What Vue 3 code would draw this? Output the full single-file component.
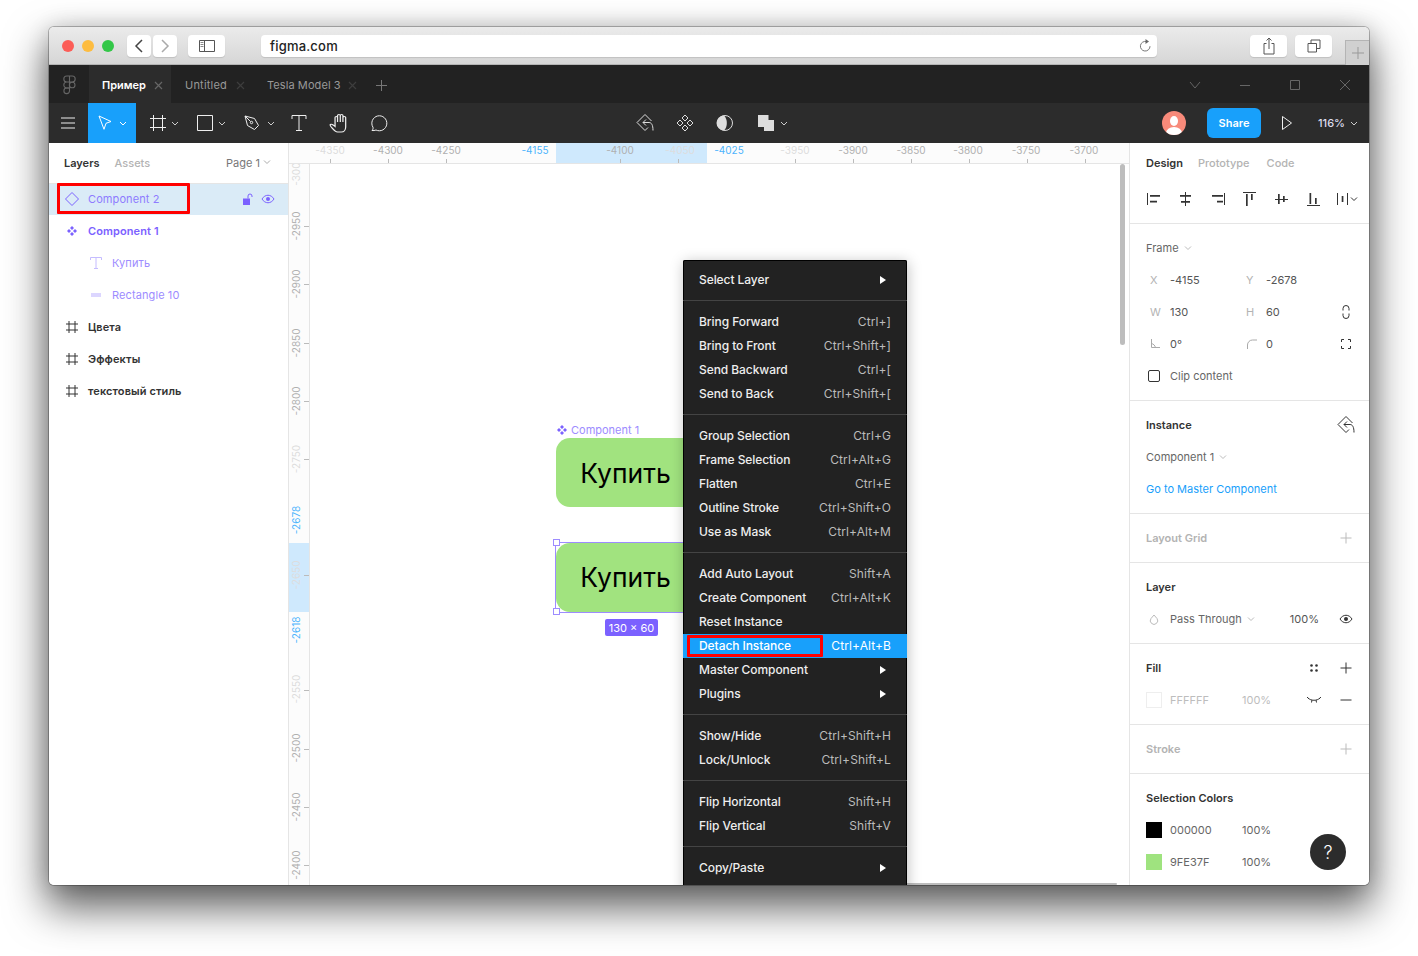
<script setup>
const rulerX = [
  { t: '-4350', x: 41, c: 'fade' }, { t: '-4300', x: 99 }, { t: '-4250', x: 157 },
  { t: '-4155', x: 246, c: 'blue' }, { t: '-4100', x: 331 }, { t: '-4050', x: 391, c: 'fade' },
  { t: '-4025', x: 440, c: 'blue' }, { t: '-3950', x: 506, c: 'fade' }, { t: '-3900', x: 564 },
  { t: '-3850', x: 622 }, { t: '-3800', x: 679 }, { t: '-3750', x: 737 }, { t: '-3700', x: 795 }
]
const rulerTicks = [41, 99, 157, 331, 389, 506, 564, 622, 680, 738, 796]
const rulerY = [
  { t: '-3000', y: 28, c: 'fade' }, { t: '-2950', y: 83 }, { t: '-2900', y: 141 }, { t: '-2850', y: 200 },
  { t: '-2800', y: 258 }, { t: '-2750', y: 316, c: 'fade' }, { t: '-2678', y: 377, c: 'blue' },
  { t: '-2650', y: 432, c: 'fade' }, { t: '-2618', y: 487, c: 'blue' }, { t: '-2550', y: 546, c: 'fade' },
  { t: '-2500', y: 605 }, { t: '-2450', y: 664 }, { t: '-2400', y: 722 }
]
const rulerYTicks = [83, 141, 200, 258, 316, 432, 547, 606, 664, 722]
const layers = [
  { name: 'Component 2', icon: 'diamond', cls: 'sel' },
  { name: 'Component 1', icon: 'comp', cls: 'comp' },
  { name: 'Купить', icon: 'text', cls: 'child' },
  { name: 'Rectangle 10', icon: 'rect', cls: 'child' },
  { name: 'Цвета', icon: 'hash', cls: 'frame' },
  { name: 'Эффекты', icon: 'hash', cls: 'frame' },
  { name: 'текстовый стиль', icon: 'hash', cls: 'frame' }
]
const menu = [
  [{ l: 'Select Layer', sub: true }],
  [{ l: 'Bring Forward', k: 'Ctrl+]' }, { l: 'Bring to Front', k: 'Ctrl+Shift+]' }, { l: 'Send Backward', k: 'Ctrl+[' }, { l: 'Send to Back', k: 'Ctrl+Shift+[' }],
  [{ l: 'Group Selection', k: 'Ctrl+G' }, { l: 'Frame Selection', k: 'Ctrl+Alt+G' }, { l: 'Flatten', k: 'Ctrl+E' }, { l: 'Outline Stroke', k: 'Ctrl+Shift+O' }, { l: 'Use as Mask', k: 'Ctrl+Alt+M' }],
  [{ l: 'Add Auto Layout', k: 'Shift+A' }, { l: 'Create Component', k: 'Ctrl+Alt+K' }, { l: 'Reset Instance' }, { l: 'Detach Instance', k: 'Ctrl+Alt+B', on: true }, { l: 'Master Component', sub: true }, { l: 'Plugins', sub: true }],
  [{ l: 'Show/Hide', k: 'Ctrl+Shift+H' }, { l: 'Lock/Unlock', k: 'Ctrl+Shift+L' }],
  [{ l: 'Flip Horizontal', k: 'Shift+H' }, { l: 'Flip Vertical', k: 'Shift+V' }],
  [{ l: 'Copy/Paste', sub: true }]
]
const detachPath = 'M15.500 8 9 1.500 1 9.500l8 8 3-3M10 6.500l-3 3 3 3M7 9.500h6c2.500 0 4 2.500 4 8'
</script>

<template>
  <div class="stage">
    <div class="win">
      <header class="title">
        <div class="lights"><i class="r"></i><i class="y"></i><i class="g"></i></div>
        <div class="navs">
          <button class="sb w24"><svg width="12" height="16" viewBox="0 0 12 16"><path d="M9 2 3 8l6 6" fill="none" stroke="#444" stroke-width="1.500"/></svg></button>
          <button class="sb w24"><svg width="12" height="16" viewBox="0 0 12 16"><path d="m3 2 6 6-6 6" fill="none" stroke="#aaa" stroke-width="1.500"/></svg></button>
        </div>
        <button class="sb w37 side"><svg width="16" height="12" viewBox="0 0 16 12"><path d="M.5.500h15v11H.5zM5.500.500v11" fill="none" stroke="#555"/><path d="M1.500 2.500h3M1.500 4.500h3M1.500 6.500h3" stroke="#888"/></svg></button>
        <div class="url"><span>figma.com</span>
          <svg class="reload" width="12" height="16" viewBox="0 0 12 16"><path d="M7.500 3.600A4.800 4.800 0 1 0 11 8.200" fill="none" stroke="#777"/><path d="M6.500 1v5l3.500-2.500z" fill="#666"/></svg>
        </div>
        <button class="sb w37 share-b"><svg width="12" height="18" viewBox="0 0 12 18"><path d="M3.500 6.500H1v10.500h10V6.500H8.500M6 12V1M3.500 3.500 6 1l2.500 2.500" fill="none" stroke="#555"/></svg></button>
        <button class="sb w37 tabs-b"><svg width="14" height="14" viewBox="0 0 14 14"><path d="M1 4.500h8.500V13H1zM4 4.500V1h9v8.500H9.500" fill="none" stroke="#555"/></svg></button>
        <div class="newtab"><svg width="12" height="12" viewBox="0 0 12 12"><path d="M6 0v12M0 6h12" stroke="#999"/></svg></div>
      </header>

      <div class="tabbar">
        <div class="logo"><svg width="13" height="20" viewBox="0 0 13 20"><g fill="none" stroke="#666" stroke-width="1.100"><path d="M6.500 1H3.800a2.800 2.800 0 0 0 0 6h2.700zM6.500 1h2.700a2.800 2.800 0 0 1 0 6H6.500zM6.500 7H3.800a2.800 2.800 0 0 0 0 6h2.700z"/><circle cx="9.200" cy="10" r="2.800"/><path d="M6.500 13H3.800a2.800 2.800 0 1 0 2.700 3z"/></g></svg></div>
        <div class="tab active"><span>Пример</span><svg class="x" width="9" height="9" viewBox="0 0 9 9"><path d="m1 1 7 7M8 1 1 8" stroke="#666" stroke-width="1.200"/></svg></div>
        <div class="tab t2"><span>Untitled</span><svg class="x" width="9" height="9" viewBox="0 0 9 9"><path d="m1 1 7 7M8 1 1 8" stroke="#3d3d3d" stroke-width="1.200"/></svg></div>
        <div class="tab t3"><span>Tesla Model 3</span><svg class="x" width="9" height="9" viewBox="0 0 9 9"><path d="m1 1 7 7M8 1 1 8" stroke="#3d3d3d" stroke-width="1.200"/></svg></div>
        <svg class="plus" width="11" height="11" viewBox="0 0 11 11"><path d="M5.500 0v11M0 5.500h11" stroke="#777"/></svg>
        <div class="winctl">
          <svg width="12" height="8" viewBox="0 0 12 8"><path d="m1 1 5 6 5-6" fill="none" stroke="#666"/></svg>
          <svg width="12" height="12" viewBox="0 0 12 12"><path d="M1 6.500h10" stroke="#666"/></svg>
          <svg width="12" height="12" viewBox="0 0 12 12"><path d="M1.500 1.500h9v9h-9z" fill="none" stroke="#666"/></svg>
          <svg width="12" height="12" viewBox="0 0 12 12"><path d="m1 1 10 10M11 1 1 11" stroke="#666"/></svg>
        </div>
      </div>

      <div class="toolbar">
        <div class="burger"><svg width="16" height="12" viewBox="0 0 16 12"><path d="M1 1h14M1 6h14M1 11h14" stroke="#eee"/></svg></div>
        <div class="tool move">
          <svg width="16" height="18" viewBox="0 0 16 18"><path d="M2 2l12 5.500-5 1.800-2 6z" fill="none" stroke="#fff"/></svg>
          <svg class="ch" width="8" height="5" viewBox="0 0 8 5"><path d="m1 1 3 3 3-3" fill="none" stroke="#fff"/></svg>
        </div>
        <div class="tool t-frame">
          <svg width="16" height="16" viewBox="0 0 16 16"><path d="M3.500 0v16M12.500 0v16M0 3.500h16M0 12.500h16" stroke="#eee"/></svg>
          <svg class="ch" width="8" height="5" viewBox="0 0 8 5"><path d="m1 1 3 3 3-3" fill="none" stroke="#ccc"/></svg>
        </div>
        <div class="tool t-rect">
          <svg width="16" height="16" viewBox="0 0 16 16"><path d="M.5.500h15v15H.5z" fill="none" stroke="#eee"/></svg>
          <svg class="ch" width="8" height="5" viewBox="0 0 8 5"><path d="m1 1 3 3 3-3" fill="none" stroke="#ccc"/></svg>
        </div>
        <div class="tool t-pen">
          <svg width="16" height="16" viewBox="0 0 16 16"><path d="M1 1l9.500 2.500 4 7-4 4-7-4zM1 1l5.500 5.500" fill="none" stroke="#eee"/><circle cx="7.500" cy="7.500" r="1.200" fill="none" stroke="#eee"/></svg>
          <svg class="ch" width="8" height="5" viewBox="0 0 8 5"><path d="m1 1 3 3 3-3" fill="none" stroke="#ccc"/></svg>
        </div>
        <div class="tool t-one"><svg width="16" height="16" viewBox="0 0 16 16"><path d="M1 4V.500h14V4M8 .500V15.500M5 15.500h6" fill="none" stroke="#eee"/></svg></div>
        <div class="tool t-one"><svg width="20" height="20" viewBox="0 0 20 20"><path transform="translate(-.2 0) scale(1.250 1)" d="M7 19c-2 0-3-2-5-5-.8-1.300-1.300-2-.8-2.500.8-.7 2-.1 3.800 2V4.500c0-1.500 2-1.500 2 0V9V2.500c0-1.500 2.200-1.500 2.200 0V9V2.500c0-1.500 2.100-1.500 2.100 0V9V4.500c0-1.500 2.200-1.500 2.200 0V14c0 3-1.500 5-3.500 5z" fill="none" stroke="#eee"/></svg></div>
        <div class="tool t-one"><svg width="18" height="18" viewBox="0 0 18 18"><path d="M2 16.500c1-.8 1.200-2 1-3.200A7.500 7.500 0 1 1 6 16c-1.300.6-2.600.7-4 .5z" fill="none" stroke="#eee"/></svg></div>
        <div class="center">
          <svg width="20" height="20" viewBox="0 0 20 20"><path :d="detachPath" fill="none" stroke="#ddd" transform="translate(1 0)"/></svg>
          <svg width="20" height="20" viewBox="0 0 20 20"><g fill="none" stroke="#ddd"><path d="m10 2 3 3-3 3-3-3zM10 12l3 3-3 3-3-3zM5 7l3 3-3 3-3-3zM15 7l3 3-3 3-3-3z"/></g></svg>
          <svg width="20" height="20" viewBox="0 0 20 20"><circle cx="10" cy="10" r="7.500" fill="none" stroke="#ddd"/><path d="M9 2.500A7.500 7.500 0 0 0 9 17.500c2-2 2.800-4.500 2.800-7.500S11 4.500 9 2.500z" fill="#ddd"/></svg>
          <div class="bool">
            <svg width="17" height="17" viewBox="0 0 17 17"><path d="M0 0h10.500v5h5.500v11H6v-4H0z" fill="#ddd"/></svg>
            <svg width="8" height="5" viewBox="0 0 8 5"><path d="m1 1 3 3 3-3" fill="none" stroke="#ccc"/></svg>
          </div>
        </div>
        <div class="right">
          <svg class="avatar" width="24" height="24" viewBox="0 0 24 24"><defs><clipPath id="av"><circle cx="12" cy="12" r="12"/></clipPath></defs><circle cx="12" cy="12" r="12" fill="#f88a7a"/><g clip-path="url(#av)" fill="#fff"><ellipse cx="12" cy="10" rx="4" ry="5"/><ellipse cx="12" cy="22" rx="8" ry="6"/></g></svg>
          <div class="share">Share</div>
          <svg class="play" width="12" height="16" viewBox="0 0 12 16"><path d="M1.500 1.500 10.500 8l-9 6.500z" fill="none" stroke="#eee"/></svg>
          <span class="zoom">116%</span>
          <svg width="8" height="5" viewBox="0 0 8 5"><path d="m1 1 3 3 3-3" fill="none" stroke="#ccc"/></svg>
        </div>
      </div>

      <div class="main">
        <aside class="left">
          <div class="lhead"><span class="on">Layers</span><span class="off">Assets</span><span class="page">Page 1</span><svg width="8" height="5" viewBox="0 0 8 5"><path d="m1 .5 3 3 3-3" fill="none" stroke="#aaa"/></svg></div>
          <div v-for="l in layers" :key="l.name" class="lrow" :class="l.cls">
            <svg width="16" height="16" viewBox="0 0 16 16" class="licon">
              <path v-if="l.icon === 'diamond'" d="m8 1.500 6.500 6.500L8 14.500 1.500 8z" fill="none" stroke="#7b61ff"/>
              <path v-else-if="l.icon === 'comp'" d="m8 3 2 2-2 2-2-2zM8 9l2 2-2 2-2-2zM5 6l2 2-2 2-2-2zM11 6l2 2-2 2-2-2z" fill="#7b61ff"/>
              <path v-else-if="l.icon === 'text'" d="M2.500 5V2.500h11V5M8 2.500v11M6 13.500h4" fill="none" stroke="#c5bcff"/>
              <rect v-else-if="l.icon === 'rect'" x="3" y="6" width="10" height="4" fill="#dcd6ff"/>
              <path v-else d="M5 2v12M11 2v12M2 5h12M2 11h12" stroke="#333"/>
            </svg>
            <span class="lname">{{ l.name }}</span>
            <template v-if="l.cls === 'sel'">
              <svg class="lock" width="10" height="12" viewBox="0 0 10 12"><path d="M0 5.500h7v6.500H0z" fill="#7b61ff"/><path d="M5 5.500V3a2 2 0 0 1 4 0v1" fill="none" stroke="#7b61ff"/></svg>
              <svg class="eye" width="14" height="10" viewBox="0 0 14 10"><path d="M1 5c3-5 9-5 12 0-3 5-9 5-12 0z" fill="none" stroke="#7b61ff"/><circle cx="7" cy="5" r="2" fill="#7b61ff"/></svg>
            </template>
          </div>
        </aside>

        <section class="canvas">
          <div class="rtop">
            <div class="hl-x"></div>
            <span v-for="r in rulerX" :key="r.t" class="rx" :class="r.c" :style="{ left: r.x + 'px' }">{{ r.t }}</span>
            <i v-for="t in rulerTicks" :key="t" class="tx" :style="{ left: t + 'px' }"></i>
          </div>
          <div class="rleft">
            <div class="hl-y"></div>
            <span v-for="r in rulerY" :key="r.t" class="ry" :class="r.c" :style="{ top: r.y + 'px' }">{{ r.t }}</span>
            <i v-for="t in rulerYTicks" :key="t" class="ty" :style="{ top: t + 'px' }"></i>
          </div>

          <div class="clabel"><svg width="10" height="10" viewBox="0 0 10 10"><path d="m5 0 2 2-2 2-2-2zM5 6l2 2-2 2-2-2zM2 3l2 2-2 2-2-2zM8 3l2 2-2 2-2-2z" fill="#7b61ff"/></svg><span>Component 1</span></div>
          <div class="btn b1">Купить</div>
          <div class="btn b2">Купить</div>
          <div class="selbox"></div>
          <i class="hd h1"></i><i class="hd h2"></i>
          <div class="size">130 × 60</div>
          <div class="vscroll"></div>
          <div class="hscroll"></div>
        </section>

        <aside class="props">
          <div class="ptabs"><span class="on">Design</span><span class="off">Prototype</span><span class="off">Code</span></div>
          <div class="aligns sect">
            <svg width="16" height="16" viewBox="0 0 16 16"><path d="M2.500 2v12" stroke="#333"/><path d="M5 4h10v1.700H5zM5 9.700h7v1.700H5z" fill="#333"/></svg>
            <svg width="16" height="16" viewBox="0 0 16 16"><path d="M8.500 1v14" stroke="#333"/><path d="M3 4h11v1.700H3zM4 10h9v1.700H4z" fill="#333"/></svg>
            <svg width="16" height="16" viewBox="0 0 16 16"><path d="M15.500 2v12" stroke="#333"/><path d="M3 4h11v1.700H3zM8 9.700h6v1.700H8z" fill="#333"/></svg>
            <svg width="16" height="16" viewBox="0 0 16 16"><path d="M2 1.500h13" stroke="#333"/><path d="M5 3h1.700v12H5zM10 3h1.700v6H10z" fill="#333"/></svg>
            <svg width="16" height="16" viewBox="0 0 16 16"><path d="M2 8.500h13" stroke="#333"/><path d="M5 3h1.700v10H5zM10 5h1.700v6H10z" fill="#333"/></svg>
            <svg width="16" height="16" viewBox="0 0 16 16"><path d="M2 14.500h13" stroke="#333"/><path d="M4.500 2h1.700v11H4.500zM10 7h1.700v6H10z" fill="#333"/></svg>
            <div class="dist"><svg width="12" height="16" viewBox="0 0 12 16"><path d="M.5 2v12M10.500 2v12" stroke="#333"/><path d="M4.700 5h1.700v6H4.700z" fill="#333"/></svg><svg width="8" height="5" viewBox="0 0 8 5"><path d="m1 .5 3 3 3-3" fill="none" stroke="#333"/></svg></div>
          </div>
          <div class="sect">
            <div class="row"><span class="v">Frame</span><svg class="cv" width="8" height="5" viewBox="0 0 8 5"><path d="m1 .5 3 3 3-3" fill="none" stroke="#bbb"/></svg></div>
            <div class="row"><span class="k">X</span><span class="val">-4155</span><span class="k">Y</span><span class="val">-2678</span></div>
            <div class="row"><span class="k">W</span><span class="val">130</span><span class="k">H</span><span class="val">60</span><svg class="rt" width="16" height="16" viewBox="0 0 16 16"><path d="M5 6.500V4.500a3 3 0 0 1 6 0v2M5 9.500v2a3 3 0 0 0 6 0v-2" fill="none" stroke="#333"/></svg></div>
            <div class="row"><span class="k"><svg width="10" height="10" viewBox="0 0 10 10"><path d="M1.500 0v8.500H10M1.500 4.500c2 .5 3.500 2 4 4" fill="none" stroke="#aaa"/></svg></span><span class="val">0°</span><span class="k"><svg width="12" height="12" viewBox="0 0 12 12"><path d="M1.500 11V7a5 5 0 0 1 5-5H11" fill="none" stroke="#aaa"/></svg></span><span class="val">0</span><svg class="rt" width="16" height="16" viewBox="0 0 16 16"><path d="M3.500 6V3.500H6M10 3.500h2.500V6M12.500 10v2.500H10M6 12.500H3.500V10" fill="none" stroke="#333"/></svg></div>
            <div class="row clip"><i class="cb"></i><span class="v">Clip content</span></div>
          </div>
          <div class="sect">
            <div class="row"><b>Instance</b><svg class="rt2" width="20" height="20" viewBox="0 0 20 20"><path :d="detachPath" fill="none" stroke="#333"/></svg></div>
            <div class="row"><span class="v">Component 1</span><svg class="cv" width="8" height="5" viewBox="0 0 8 5"><path d="m1 .5 3 3 3-3" fill="none" stroke="#bbb"/></svg></div>
            <div class="row"><span class="link">Go to Master Component</span></div>
          </div>
          <div class="sect">
            <div class="row"><b class="mute">Layout Grid</b><svg class="rt" width="16" height="16" viewBox="0 0 16 16"><path d="M8 2.500v11M2.500 8h11" stroke="#bbb"/></svg></div>
          </div>
          <div class="sect">
            <div class="row"><b>Layer</b></div>
            <div class="row"><svg class="drop" width="10" height="11" viewBox="0 0 10 11"><path d="M5 1 2 4.500a3.700 3.700 0 1 0 6 0z" fill="none" stroke="#bbb"/></svg><span class="v pt">Pass Through</span><svg class="cv" width="8" height="5" viewBox="0 0 8 5"><path d="m1 .5 3 3 3-3" fill="none" stroke="#bbb"/></svg><span class="pct2">100%</span><svg class="rt eye2" width="14" height="10" viewBox="0 0 14 10"><path d="M1 5c3-5 9-5 12 0-3 5-9 5-12 0z" fill="none" stroke="#333"/><circle cx="7" cy="5" r="2" fill="#333"/></svg></div>
          </div>
          <div class="sect">
            <div class="row"><b>Fill</b><svg class="grid4" width="16" height="16" viewBox="0 0 16 16"><g fill="#333"><circle cx="5.500" cy="5.500" r="1.300"/><circle cx="10.500" cy="5.500" r="1.300"/><circle cx="5.500" cy="10.500" r="1.300"/><circle cx="10.500" cy="10.500" r="1.300"/></g></svg><svg class="rt" width="16" height="16" viewBox="0 0 16 16"><path d="M8 2.500v11M2.500 8h11" stroke="#333"/></svg></div>
            <div class="row faint"><i class="sw white"></i><span class="hex">FFFFFF</span><span class="pct">100%</span><svg class="grid4" width="16" height="10" viewBox="0 0 16 10"><path d="M2 3c3 3 9 3 12 0M1 2l2 2M15 2l-2 2M6 5l-.5 2.500M10 5l.5 2.500" fill="none" stroke="#333"/></svg><svg class="rt" width="16" height="16" viewBox="0 0 16 16"><path d="M2.500 8h11" stroke="#333"/></svg></div>
          </div>
          <div class="sect">
            <div class="row"><b class="mute">Stroke</b><svg class="rt" width="16" height="16" viewBox="0 0 16 16"><path d="M8 2.500v11M2.500 8h11" stroke="#bbb"/></svg></div>
          </div>
          <div class="sect last">
            <div class="row"><b>Selection Colors</b></div>
            <div class="row"><i class="sw black"></i><span class="hex">000000</span><span class="pct">100%</span></div>
            <div class="row"><i class="sw green"></i><span class="hex">9FE37F</span><span class="pct">100%</span></div>
          </div>
        </aside>

        <div class="menu">
          <template v-for="(g, i) in menu" :key="i">
            <div v-if="i" class="msep"></div>
            <div v-for="m in g" :key="m.l" class="mitem" :class="{ hot: m.on }">
              <span>{{ m.l }}</span>
              <span v-if="m.k" class="mk">{{ m.k }}</span>
              <svg v-if="m.sub" class="arrow" width="6" height="8" viewBox="0 0 6 8"><path d="M0 0l6 4-6 4z" fill="#fff"/></svg>
            </div>
          </template>
          <div class="redbox"></div>
        </div>

        <div class="redlayer"></div>
        <div class="help">?</div>
      </div>
    </div>
  </div>
</template>

<style>
html, body { margin: 0; background: #fff; overflow: hidden; }
</style>

<style scoped>
.stage { width: 1418px; height: 956px; box-sizing: border-box; padding: 27px 49px 71px; background: #fff; font-family: Inter, "Noto Sans", sans-serif; font-size: 11px; color: #333; }
.win { width: 1320px; height: 858px; border-radius: 5px; overflow: hidden; display: flex; flex-direction: column; background: #fff; box-shadow: 0 0 0 1px rgba(0,0,0,.25), 0 20px 40px 3px rgba(0,0,0,.62), 0 0 22px rgba(0,0,0,.14); }
.title { height: 38px; flex: none; box-sizing: border-box; background: linear-gradient(#ebebeb, #d6d6d6); border-bottom: 1px solid #b4b4b4; display: flex; align-items: center; position: relative; padding-left: 13px; }
.lights { display: flex; gap: 8px; }
.lights i { width: 12px; height: 12px; border-radius: 50%; }
.r { background: #fc5d57; } .y { background: #fdbc40; } .g { background: #33c748; }
.navs { display: flex; gap: 2px; margin-left: 13px; }
.sb { height: 22px; border: 0; padding: 0; background: #fff; border-radius: 4px; box-shadow: 0 1px 1px rgba(0,0,0,.12); display: flex; align-items: center; justify-content: center; }
.w24 { width: 24px; } .w37 { width: 37px; }
.side { margin-left: 11px; }
.url { margin-left: 36px; width: 896px; height: 22px; background: #fff; border-radius: 4px; box-shadow: 0 1px 1px rgba(0,0,0,.12); display: flex; align-items: center; justify-content: space-between; padding: 0 6px 0 9px; box-sizing: border-box; font-size: 13px; color: #222; font-weight: 500; letter-spacing: .2px; }
.share-b { margin-left: 93px; }
.tabs-b { margin-left: 8px; }
.newtab { position: absolute; right: 0; top: 13px; width: 24px; height: 25px; background: #d0d0d0; border: 1px solid #b4b4b4; border-bottom: 0; border-right: 0; box-sizing: border-box; display: flex; align-items: center; justify-content: center; }

.tabbar { height: 38px; flex: none; box-sizing: border-box; padding-top: 2px; background: #222; display: flex; align-items: center; color: #999; font-size: 11px; }
.logo { width: 40px; display: flex; justify-content: center; }
.tab { height: 38px; margin-top: -2px; padding-top: 2px; box-sizing: border-box; display: flex; align-items: center; }
.tab .x { margin-left: auto; }
.tab.active { width: 82px; background: #2c2c2c; padding-left: 13px; padding-right: 8px; color: #fff; font-weight: 600; }
.t2 { margin-left: 14px; width: 82px; padding-right: 22px; letter-spacing: .2px; }
.t3 { width: 100px; padding-right: 10px; letter-spacing: .08px; }
.plus { margin-left: 9px; }
.winctl { margin-left: auto; margin-right: -1px; width: 200px; display: grid; grid-template-columns: repeat(4, 50px); justify-items: center; align-items: center; }

.toolbar { height: 40px; flex: none; background: #2c2c2c; display: flex; align-items: center; position: relative; }
.burger { width: 38px; margin-right: 1px; display: flex; justify-content: center; }
.tool { height: 40px; display: flex; align-items: center; }
.move { width: 48px; background: #18a0fb; justify-content: center; gap: 6px; }
.t-frame { margin-left: 14px; gap: 5px; width: 47px; }
.t-rect { width: 47px; gap: 5px; }
.t-pen { width: 35px; gap: 7px; flex: none; }
.t-one { width: 40px; justify-content: center; }
.center { position: absolute; left: 586px; top: 0; height: 40px; display: flex; align-items: center; gap: 20px; }
.bool { display: flex; align-items: center; gap: 5px; margin-left: 3px; }
.right { margin-left: auto; display: flex; align-items: center; padding-right: 11px; }
.share { width: 54px; height: 30px; margin-left: 21px; border-radius: 6px; background: #18a0fb; color: #fff; font-weight: 600; display: flex; align-items: center; justify-content: center; }
.play { margin-left: 20px; margin-right: 1px; }
.zoom { margin-left: 24px; margin-right: 5px; color: #dde; font-weight: 500; }

.main { flex: 1; min-height: 0; display: flex; position: relative; }
.left { width: 240px; flex: none; box-sizing: border-box; border-right: 1px solid #e5e5e5; background: #fff; }
.lhead { height: 41px; box-sizing: border-box; border-bottom: 1px solid #e5e5e5; display: flex; align-items: center; padding: 0 17px 1px 15px; font-weight: 500; }
.on { color: #333; font-weight: 600; }
.off { color: #b3b3b3; font-weight: 500; margin-left: 15px; }
.page { margin-left: auto; margin-right: 3px; color: #777; font-weight: 400; }
.lrow { height: 32px; box-sizing: border-box; display: flex; align-items: center; padding-left: 15px; font-weight: 500; letter-spacing: .1px; }
.licon { flex: none; }
.lname { margin-left: 8px; }
.sel { background: #daebf7; color: #8e7bff; font-weight: 400; height: 31px; padding-bottom: 1px; }
.comp { color: #7b61ff; font-weight: 600; }
.child { padding-left: 39px; color: #9d8cff; font-weight: 400; }
.frame { color: #333; font-weight: 600; }
.lock { margin-left: auto; }
.eye { margin: 0 13px 0 8px; }

.canvas { flex: 1; position: relative; overflow: hidden; background: #fff; }
.rtop { position: absolute; z-index: 2; left: 0; right: 0; top: 0; height: 21px; box-sizing: border-box; background: #fcfcfc; border-bottom: 1px solid #e5e5e5; }
.rleft { position: absolute; left: 0; top: 0; bottom: 0; width: 21px; box-sizing: border-box; background: #fcfcfc; border-right: 1px solid #e5e5e5; overflow: hidden; }
.rx { position: absolute; top: 0; transform: translateX(-50%); font-size: 10px; line-height: 14px; color: #b0b0b0; }
.tx { position: absolute; top: 16px; width: 1px; height: 4px; background: #bbb; }
.ty { position: absolute; left: 15px; height: 1px; width: 5px; background: #bbb; }
.ry { position: absolute; left: 7px; transform: translate(-50%, -50%) rotate(-90deg); font-size: 10px; line-height: 14px; color: #b0b0b0; white-space: nowrap; }
.rx.fade, .ry.fade { color: #ddd; }
.rx.blue, .ry.blue { color: #4db4fc; }
.hl-x { position: absolute; left: 267px; top: 0; width: 151px; height: 20px; background: #cfe9fd; }
.hl-y { position: absolute; left: 0; top: 400px; width: 20px; height: 69px; background: #cfe9fd; }
.ry.fade:nth-of-type(9), .rx.fade:nth-of-type(7) { color: #b9d6ea; }
.clabel { position: absolute; left: 268px; top: 280px; display: flex; align-items: center; gap: 4px; color: #9d8cff; line-height: 14px; }
.btn { position: absolute; left: 267px; width: 151px; height: 69px; box-sizing: border-box; padding-right: 12px; border-radius: 14px; background: #a1e37f; color: #000; font-size: 26.500px; display: flex; align-items: center; justify-content: center; }
.b1 { top: 295px; }
.b2 { top: 400px; padding-bottom: 2px; }
.selbox { position: absolute; left: 266px; top: 399px; width: 200px; height: 71px; box-sizing: border-box; border: 1px solid #9d8cff; border-right: 0; }
.hd { position: absolute; width: 5px; height: 5px; background: #fff; border: 1px solid #9d8cff; }
.h1 { left: 264px; top: 396px; }
.h2 { left: 264px; top: 465px; }
.size { position: absolute; left: 316px; top: 476px; width: 53px; height: 17px; border-radius: 2px; background: #7b61ff; color: #fff; display: flex; align-items: center; justify-content: center; }
.vscroll { position: absolute; left: 831px; top: 21px; width: 5px; height: 181px; background: #bdbdbd; border-radius: 3px; }
.hscroll { position: absolute; left: 600px; bottom: 0; width: 228px; height: 2px; background: #bdbdbd; border-radius: 2px; }

.props { width: 240px; flex: none; box-sizing: border-box; border-left: 1px solid #e5e5e5; background: #fff; position: relative; }
.ptabs { height: 40px; display: flex; align-items: center; padding-left: 16px; }
.ptabs .off { margin-left: 15px; }
.ptabs .off + .off { margin-left: 17px; }
.sect { padding: 8px 0; border-bottom: 1px solid #e5e5e5; }
.last { border-bottom: 0; padding-bottom: 0; }
.aligns { height: 32px; padding: 0 0 8px 15px; display: flex; align-items: center; gap: 16px; box-sizing: content-box; }
.dist { display: flex; align-items: center; gap: 1px; }
.row { height: 32px; display: flex; align-items: center; padding: 0 15px 0 16px; color: #666; }
.row b { font-weight: 600; color: #333; }
.row b.mute { color: #b3b3b3; }
.k { width: 24px; flex: none; color: #b3b3b3; padding-left: 4px; box-sizing: border-box; display: flex; }
.val { width: 72px; flex: none; color: #555; }
.rt { margin-left: auto; flex: none; }
.rt2 { margin-left: auto; margin-right: -3px; flex: none; }
.eye2 { margin-left: 20px; margin-right: 1px; }
.cv { margin-left: 5px; }
.cb { width: 10px; height: 10px; border: 1px solid #333; border-radius: 2px; margin-right: 10px; margin-left: 2px; }
.link { color: #18a0fb; }
.drop { margin: 0 11px 0 3px; }
.pt { color: #666; }
.pct2 { margin-left: auto; color: #555; }
.grid4 { margin-left: auto; margin-right: 8px; }
.grid4 + .rt { margin-left: 8px; }
.sw { width: 16px; height: 16px; box-sizing: border-box; margin-right: 8px; flex: none; }
.white { background: #fff; border: 1px solid #eee; }
.black { background: #000; }
.green { background: #9fe37f; }
.hex { width: 72px; color: #666; }
.pct { color: #666; }
.faint .hex, .faint .pct { color: #bdbdbd; }

.help { position: absolute; z-index: 6; left: 1261px; top: 691px; width: 36px; height: 36px; border-radius: 50%; background: #2c2c2c; color: #fff; font-size: 18px; font-weight: 300; display: flex; align-items: center; justify-content: center; }

.menu { position: absolute; left: 634px; top: 117px; width: 224px; height: 650px; box-sizing: border-box; padding: 8px 0; background: #222; color: #fff; font-size: 12px; box-shadow: inset 0 0 0 1px #000, 1px 2px 14px rgba(0,0,0,.25); z-index: 5; border-radius: 2px; }
.mitem { height: 24px; box-sizing: border-box; padding: 0 16px 2px 16px; display: flex; align-items: center; justify-content: space-between; color: #eee; font-weight: 500; letter-spacing: -.07px; position: relative; }
.mk { color: #bbb; font-weight: 400; letter-spacing: .1px; }
.hot { background: #18a0fb; color: #fff; }
.hot .mk { color: #fff; }
.msep { height: 1px; background: #444; margin: 8px 0 9px; }
.arrow { margin-right: 5px; transform: translateY(1px); }
.redbox { position: absolute; left: 4px; top: 375px; width: 136px; height: 22px; box-sizing: border-box; border: 3px solid #f00; border-radius: 1px; }
.redlayer { position: absolute; left: 8px; top: 40px; width: 133px; height: 31px; box-sizing: border-box; border: 3px solid #f00; border-radius: 1px; z-index: 4; }
</style>
